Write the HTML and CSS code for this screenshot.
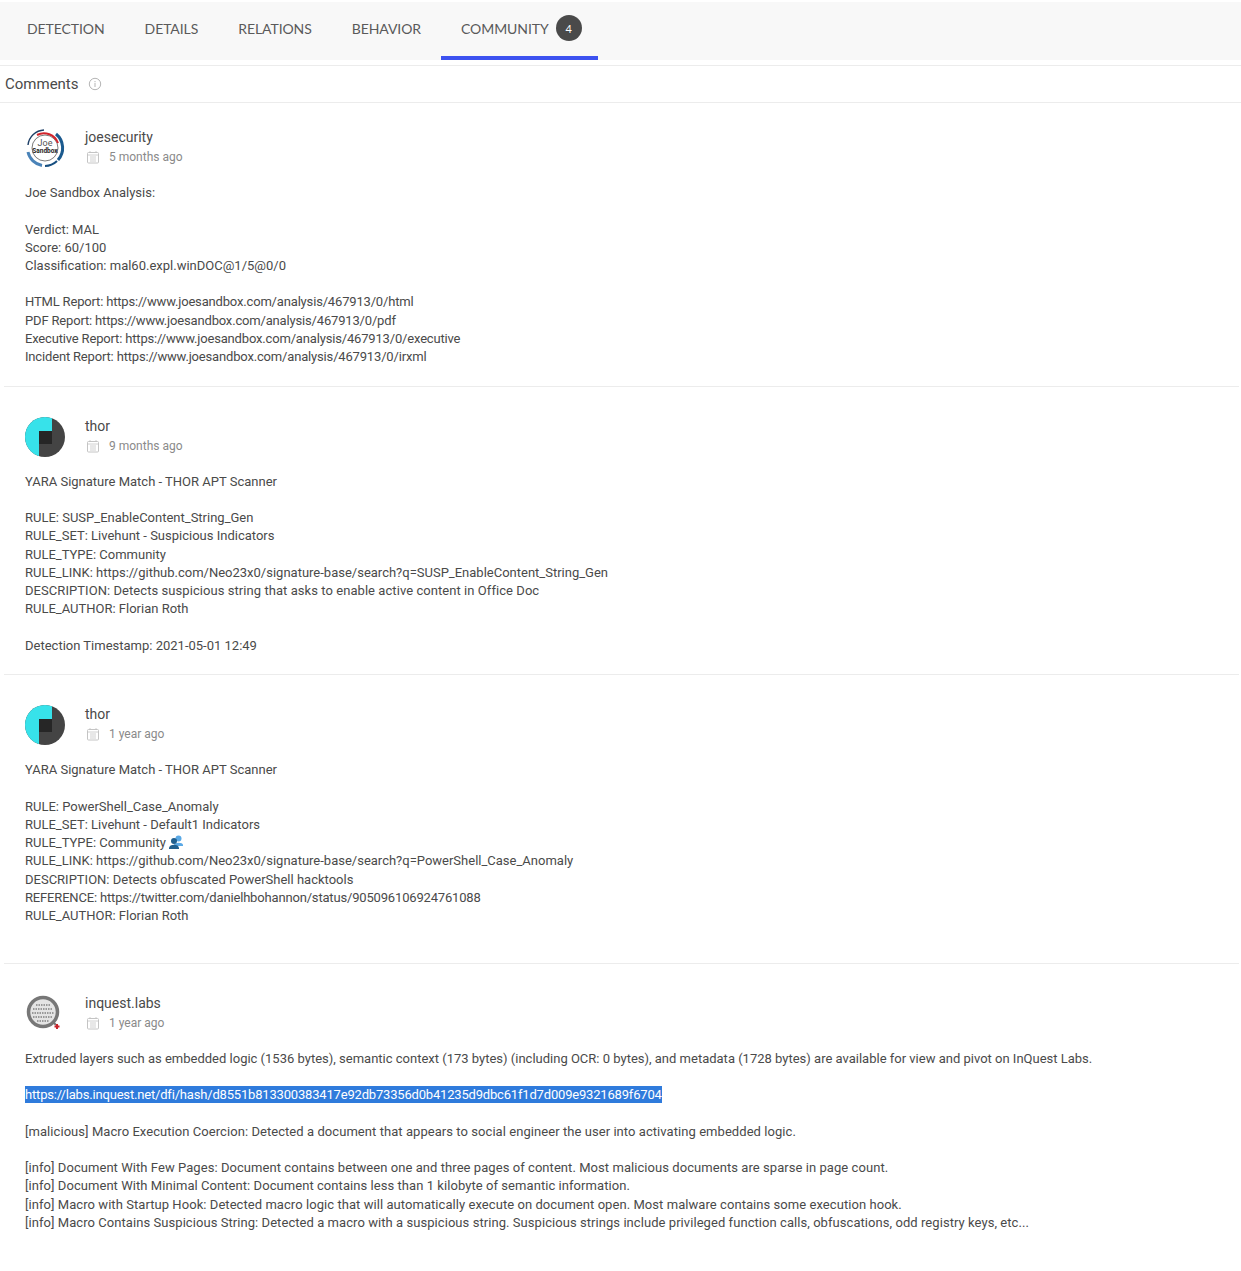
FILE: index.html
```html
<!DOCTYPE html>
<html lang="en">
<head>
  <meta charset="UTF-8" />
  <title>Community</title>
  <link rel="stylesheet" href="styles.css">
</head>
<body>

  <!-- TABS -->
  <nav class="tabs">
    <a class="tab">DETECTION</a>
    <a class="tab">DETAILS</a>
    <a class="tab">RELATIONS</a>
    <a class="tab">BEHAVIOR</a>
    <a class="tab active">COMMUNITY <span class="badge">4</span></a>
  </nav>

  <div class="comments-head">
    <span>Comments</span>
    <svg class="info" viewBox="0 0 14 14" width="14" height="14">
      <circle cx="7" cy="7" r="5.7" fill="none" stroke="#b5b5b5" />
      <path d="M7 6v4M7 4v1.2" stroke="#b5b5b5" fill="none" />
    </svg>
  </div>

  <!-- COMMENT 1 -->
  <article class="comment first">
    <header class="author">
      <svg class="avatar" viewBox="0 0 40 40" width="40" height="40">
        <circle cx="20" cy="20" r="13" fill="#fff" stroke="#222" stroke-width=".6" />
        <path d="M3 17A17 17 0 0 1 19 2" fill="none" stroke="#1d3f66" stroke-width="1.4" />
        <path d="M12 7A15 15 0 0 1 33 15" fill="none" stroke="#d3242c" stroke-width="2" />
        <path d="M31 6A18 18 0 0 1 33 32" fill="none" stroke="#1b5a8e" stroke-width="3" />
        <path d="M3 24A17.500 17.500 0 0 0 17 37.500" fill="none" stroke="#4a83b8" stroke-width="3" />
        <path d="M20 38A18 18 0 0 0 32 33" fill="none" stroke="#174f80" stroke-width="2" />
        <text x="20" y="18" class="logo-joe">Joe</text>
        <text x="20" y="25" class="logo-sandbox">Sandbox</text>
      </svg>
      <div>
        <div class="name">joesecurity</div>
        <div class="date">
          <svg class="cal" viewBox="0 0 14 14" width="14" height="14"><use href="#cal-icon" /></svg>
          5 months ago
        </div>
      </div>
    </header>
    <p class="body">Joe Sandbox Analysis:

Verdict: MAL
Score: 60/100
Classification: mal60.expl.winDOC@1/5@0/0

<span class="url">HTML Report: https://www.joesandbox.com/analysis/467913/0/html
PDF Report: https://www.joesandbox.com/analysis/467913/0/pdf
Executive Report: https://www.joesandbox.com/analysis/467913/0/executive
Incident Report: https://www.joesandbox.com/analysis/467913/0/irxml</span></p>
  </article>

  <!-- COMMENT 2 -->
  <article class="comment">
    <header class="author">
      <svg class="avatar" viewBox="0 0 40 40" width="40" height="40"><use href="#thor-logo" /></svg>
      <div>
        <div class="name">thor</div>
        <div class="date">
          <svg class="cal" viewBox="0 0 14 14" width="14" height="14"><use href="#cal-icon" /></svg>
          9 months ago
        </div>
      </div>
    </header>
    <p class="body">YARA Signature Match - THOR APT Scanner

RULE: SUSP_EnableContent_String_Gen
RULE_SET: Livehunt - Suspicious Indicators
RULE_TYPE: Community
RULE_LINK: https://github.com/Neo23x0/signature-base/search?q=SUSP_EnableContent_String_Gen
<span class="wide">DESCRIPTION: Detects suspicious string that asks to enable active content in Office Doc</span>
RULE_AUTHOR: Florian Roth

Detection Timestamp: 2021-05-01 12:49</p>
  </article>

  <!-- COMMENT 3 -->
  <article class="comment">
    <header class="author">
      <svg class="avatar" viewBox="0 0 40 40" width="40" height="40"><use href="#thor-logo" /></svg>
      <div>
        <div class="name">thor</div>
        <div class="date">
          <svg class="cal" viewBox="0 0 14 14" width="14" height="14"><use href="#cal-icon" /></svg>
          1 year ago
        </div>
      </div>
    </header>
    <p class="body">YARA Signature Match - THOR APT Scanner

RULE: PowerShell_Case_Anomaly
RULE_SET: Livehunt - Default1 Indicators
RULE_TYPE: Community <svg class="people" viewBox="0 0 14 14" width="14" height="14"><circle cx="9.500" cy="3.500" r="3" fill="#5aa9e6" /><path d="M5 10c0-3 9-3 9 0v1H5z" fill="#5aa9e6" /><circle cx="5" cy="6" r="3" fill="#1f5f8f" /><path d="M0 13c0-4.500 10-4.500 10 0v1H0z" fill="#1f5f8f" /></svg>
RULE_LINK: https://github.com/Neo23x0/signature-base/search?q=PowerShell_Case_Anomaly
DESCRIPTION: Detects obfuscated PowerShell hacktools
<span class="url">REFERENCE: https://twitter.com/danielhbohannon/status/905096106924761088</span>
RULE_AUTHOR: Florian Roth

</p>
  </article>

  <!-- COMMENT 4 -->
  <article class="comment last">
    <header class="author">
      <svg class="avatar" viewBox="0 0 40 40" width="40" height="40">
        <circle cx="18" cy="18" r="14.500" fill="#e4e4e4" stroke="#777" stroke-width="3.500" />
        <g class="dots">
          <path d="M11 11h14M8 15h20M7 19h22M8 23h20M12 27h12" />
        </g>
        <path d="M28 28l3 3" stroke="#777" stroke-width="2" />
        <path d="M31 30h2v1.500h1.500v2H33V35h-2v-1.500h-1.500v-2H31z" fill="#c9252d" />
      </svg>
      <div>
        <div class="name">inquest.labs</div>
        <div class="date">
          <svg class="cal" viewBox="0 0 14 14" width="14" height="14"><use href="#cal-icon" /></svg>
          1 year ago
        </div>
      </div>
    </header>
    <p class="body">Extruded layers such as embedded logic (1536 bytes), semantic context (173 bytes) (including OCR: 0 bytes), and metadata (1728 bytes) are available for view and pivot on InQuest Labs.

<span class="selected">https://labs.inquest.net/dfi/hash/d8551b813300383417e92db73356d0b41235d9dbc61f1d7d009e9321689f6704</span>

<span class="wide">[malicious] Macro Execution Coercion: Detected a document that appears to social engineer the user into activating embedded logic.

[info] Document With Few Pages: Document contains between one and three pages of content. Most malicious documents are sparse in page count.
[info] Document With Minimal Content: Document contains less than 1 kilobyte of semantic information.
[info] Macro with Startup Hook: Detected macro logic that will automatically execute on document open. Most malware contains some execution hook.
[info] Macro Contains Suspicious String: Detected a macro with a suspicious string. Suspicious strings include privileged function calls, obfuscations, odd registry keys, etc...</span></p>
  </article>

  <!-- SHARED ICONS -->
  <svg class="defs" width="0" height="0">
    <defs>
      <g id="cal-icon" fill="none" stroke="#c4c4c4">
        <rect x="1.500" y="2.500" width="11" height="10.500" rx="1" />
        <path d="M1.500 5h11M4 1v2M10 1v2M4 7h6M4 9h6M4 11h6" stroke-width=".8" />
      </g>
      <g id="thor-logo">
        <clipPath id="thor-clip"><circle cx="20" cy="20" r="20" /></clipPath>
        <g clip-path="url(#thor-clip)">
          <rect width="40" height="40" fill="#444" />
          <path d="M0 0H27V14H14V40H0z" fill="#37e2ea" />
          <rect x="14" y="14" width="13" height="13" fill="#262626" />
        </g>
      </g>
    </defs>
  </svg>

</body>
</html>
```

FILE: styles.css
```css
body {
  margin: 0;
  padding-top: 2px;
  font-family: Roboto, "Liberation Sans", sans-serif;
  font-size: 13px;
  color: #4a4a4a;
  background: #fff;
}

.tabs {
  display: flex;
  height: 58px;
  padding-left: 7px;
  background: #f8f8f8;
  margin-bottom: 5px;
}

.tab {
  display: flex;
  align-items: center;
  gap: 8px;
  height: 52px;
  padding: 0 20px 2px;
  font-family: Lato, sans-serif;
  font-size: 14px;
  letter-spacing: -0.08px;
  color: #5a5a5a;
}

.tab.active {
  gap: 7px;
  padding-right: 16px;
  border-bottom: 4px solid #3d52f0;
}

.badge {
  display: flex;
  align-items: center;
  justify-content: center;
  width: 26px;
  height: 26px;
  border-radius: 50%;
  background: #4a4a4a;
  color: #fff;
  font-size: 11px;
}

.comments-head {
  display: flex;
  align-items: center;
  gap: 9px;
  height: 36px;
  padding-left: 5px;
  border-top: 1px solid #ececec;
  border-bottom: 1px solid #ececec;
  font-size: 15px;
}

.comment {
  margin: 0 2px 0 4px;
  padding: 30px 21px 19.45px;
  border-bottom: 1px solid #ececec;
}

.comment.first {
  padding-top: 25px;
}

.comment.last {
  border-bottom: none;
}

.author {
  display: flex;
  align-items: flex-start;
  gap: 20px;
  height: 40px;
  margin-bottom: 16.15px;
}

.avatar {
  flex: none;
}

.logo-joe {
  font-size: 9px;
  text-anchor: middle;
  fill: #555;
}

.logo-sandbox {
  font-size: 6.500px;
  font-weight: 700;
  text-anchor: middle;
  fill: #222;
}

.dots path {
  fill: none;
  stroke: #999;
  stroke-width: 2;
  stroke-dasharray: 1.500 1;
}

.name {
  margin-bottom: 3px;
  line-height: 19px;
  font-size: 14px;
  color: #4a4a4a;
}

.date {
  display: flex;
  align-items: center;
  gap: 9px;
  font-size: 12px;
  color: #8a8a8a;
}

.cal {
  margin-left: 1px;
}

.body {
  margin: 0;
  white-space: pre-wrap;
  line-height: 18.2px;
}

.url {
  letter-spacing: -0.17px;
}

.wide {
  letter-spacing: 0.06px;
}

.people {
  vertical-align: -2px;
}

.selected {
  padding: 1px 0;
  background: #2f7bdc;
  color: #fff;
  letter-spacing: -0.18px;
}

.defs {
  position: absolute;
}
```
